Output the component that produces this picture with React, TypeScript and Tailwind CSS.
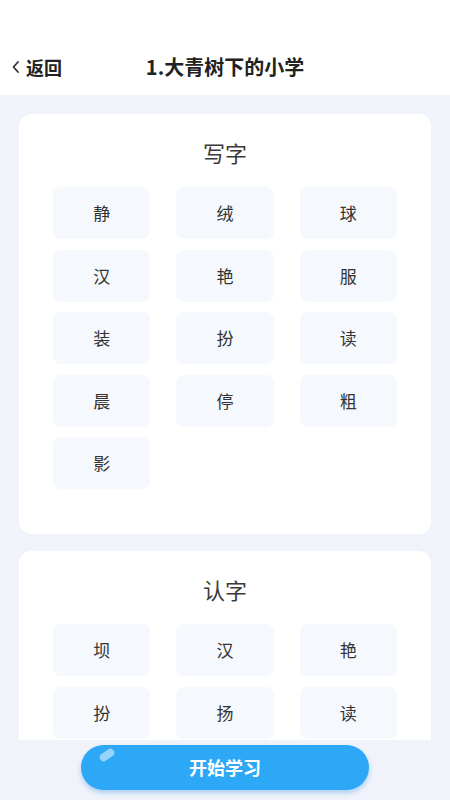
import React from "react";

const write = ["静", "绒", "球", "汉", "艳", "服", "装", "扮", "读", "晨", "停", "粗", "影"];
const read = ["坝", "汉", "艳", "扮", "扬", "读"];

function Card({ title, chars }: { title: string; chars: string[] }) {
  return (
    <div className="bg-white rounded-[12px] px-[34px] pt-[22px] pb-[45px]">
      <div className="text-center text-[22px] leading-[32px] text-[#3a3a3a] mb-[19px]">{title}</div>
      <div className="grid grid-cols-3 gap-x-[26px] gap-y-[10.5px]">
        {chars.map((c, i) => (
          <div
            key={i}
            className="h-[52px] rounded-[8px] bg-[#f5f8fc] flex items-center justify-center text-[17px] text-[#333]"
          >
            {c}
          </div>
        ))}
      </div>
    </div>
  );
}

export default function App() {
  return (
    <div
      className="w-[450px] h-[800px] flex flex-col bg-[#f1f3fa] overflow-hidden"
      style={{ fontFamily: '"Noto Sans CJK SC", "Noto Sans", sans-serif' }}
    >
      <div className="h-[95px] bg-white flex items-end pb-[16px] relative shrink-0">
        <div className="flex items-center pl-[11px] gap-[5px] text-[18px] font-bold text-[#222] leading-[24px]">
          <svg width="10" height="14" viewBox="0 0 10 14">
            <path d="M7 2 L2.5 7 L7 12" fill="none" stroke="#333" strokeWidth="1.8" strokeLinecap="round" strokeLinejoin="round" />
          </svg>
          <span>返回</span>
        </div>
        <div className="absolute left-0 right-0 bottom-[16px] text-center text-[20px] font-bold text-[#222] leading-[24px] pointer-events-none">
          1.大青树下的小学
        </div>
      </div>
      <div className="h-[645px] overflow-hidden px-[19px] pt-[19px] flex flex-col gap-[17px] shrink-0">
        <Card title="写字" chars={write} />
        <Card title="认字" chars={read} />
      </div>
      <div className="flex-1 flex justify-center pt-[5px]">
        <button className="relative w-[288px] h-[45px] rounded-full bg-[#2ca8f7] text-white text-[18px] font-bold shadow-[0_3px_5px_rgba(44,140,230,0.35)]">
          <span
            className="absolute left-[18px] top-[6px] w-[16px] h-[8px] rounded-full bg-white/50"
            style={{ transform: "rotate(-35deg)" }}
          />
          开始学习
        </button>
      </div>
    </div>
  );
}
